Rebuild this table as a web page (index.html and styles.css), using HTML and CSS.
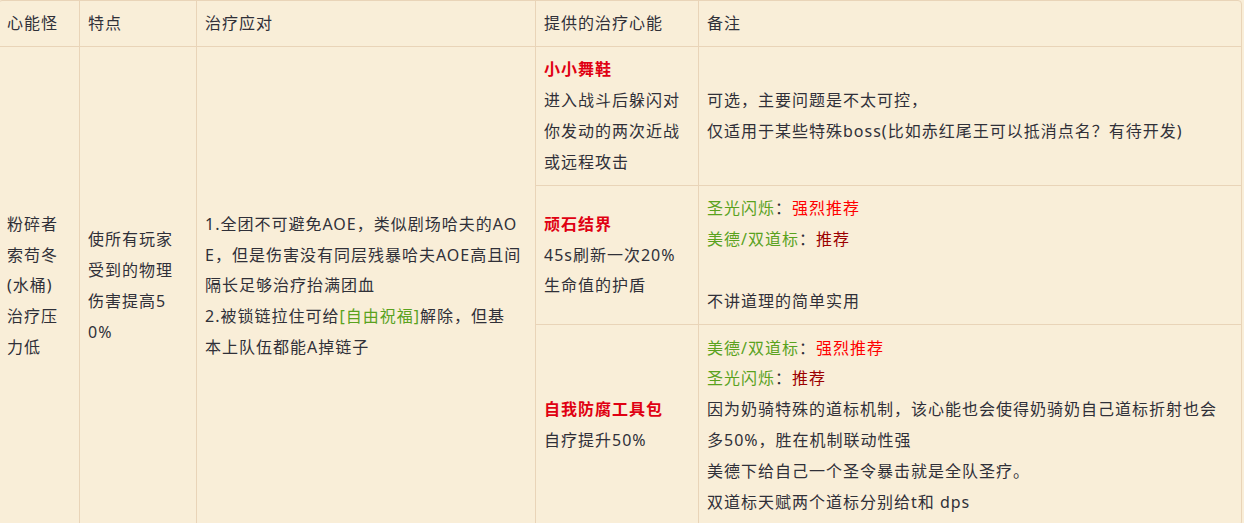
FILE: index.html
```html
<!DOCTYPE html>
<html lang="zh-CN">
<head>
<meta charset="utf-8">
<title>心能怪治疗应对</title>
<link rel="stylesheet" href="styles.css">
</head>
<body>
<div class="wrap">
<table class="grid">
  <colgroup>
    <col class="c1"><col class="c2"><col class="c3"><col class="c4"><col class="c5">
  </colgroup>
  <thead>
    <tr>
      <th>心能怪</th>
      <th>特点</th>
      <th>治疗应对</th>
      <th>提供的治疗心能</th>
      <th class="last">备注</th>
    </tr>
  </thead>
  <tbody>
    <tr>
      <td rowspan="3" class="bottom">粉碎者<br>索苟冬<br>(水桶)<br>治疗压<br>力低</td>
      <td rowspan="3" class="bottom">使所有玩家<br>受到的物理<br>伤害提高5<br>0%</td>
      <td rowspan="3" class="bottom">1.全团不可避免AOE，类似剧场哈夫的AO<br>E，但是伤害没有同层残暴哈夫AOE高且间<br>隔长足够治疗抬满团血<br>2.被锁链拉住可给<span class="green">[自由祝福]</span>解除，但基<br>本上队伍都能A掉链子</td>
      <td><strong class="name">小小舞鞋</strong><br>进入战斗后躲闪对<br>你发动的两次近战<br>或远程攻击</td>
      <td class="last">可选，主要问题是不太可控，<br>仅适用于某些特殊boss(比如赤红尾王可以抵消点名？有待开发)</td>
    </tr>
    <tr>
      <td><strong class="name">顽石结界</strong><br>45s刷新一次20%<br>生命值的护盾</td>
      <td class="last"><span class="green">圣光闪烁</span>：<span class="red">强烈推荐</span><br><span class="green">美德/双道标</span>：<span class="dark-red">推荐</span><br>&nbsp;<br>不讲道理的简单实用</td>
    </tr>
    <tr>
      <td class="bottom"><strong class="name">自我防腐工具包</strong><br>自疗提升50%</td>
      <td class="last bottom"><span class="green">美德/双道标</span>：<span class="red">强烈推荐</span><br><span class="green">圣光闪烁</span>：<span class="dark-red">推荐</span><br>因为奶骑特殊的道标机制，该心能也会使得奶骑奶自己道标折射也会<br>多50%，胜在机制联动性强<br>美德下给自己一个圣令暴击就是全队圣疗。<br>双道标天赋两个道标分别给t和 dps</td>
    </tr>
  </tbody>
</table>
</div>
</body>
</html>
```
FILE: styles.css
```css
html, body {
  margin: 0;
  padding: 0;
  background: #f9eed8;
}

.wrap {
  margin-left: -2px;
  width: 1242px;
  border: 1px solid #e9d4b8;
  border-radius: 4px;
  overflow: hidden;
  background: #f9eed8;
}

.grid {
  border-collapse: separate;
  border-spacing: 0;
  table-layout: fixed;
  width: 1242px;
  font-family: "Noto Sans", "Noto Sans CJK SC", sans-serif;
  font-size: 16px;
  line-height: 30.8px;
  letter-spacing: 1px;
  color: #303038;
}

.c1 { width: 81px; }
.c2 { width: 117px; }
.c3 { width: 339px; }
.c4 { width: 163px; }
.c5 { width: 542px; }

.grid th,
.grid td {
  box-sizing: border-box;
  border-right: 1px solid #e9d4b8;
  border-bottom: 1px solid #e9d4b8;
  vertical-align: middle;
  text-align: left;
  word-break: break-all;
}

.grid th {
  font-weight: normal;
  padding: 7px 8px;
}

.grid td {
  padding: 7.5px 8px;
}

.grid .last {
  border-right: none;
}

.grid .bottom {
  border-bottom: none;
}

.name {
  color: #e00012;
  font-weight: bold;
}

.green {
  color: #5aa21e;
}

.red {
  color: #f00;
}

.dark-red {
  color: #9b0000;
}
```
